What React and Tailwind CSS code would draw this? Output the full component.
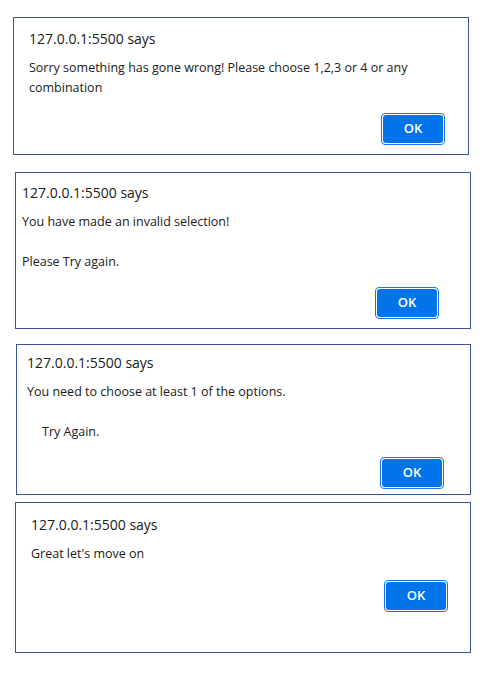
function OkButton() {
  return (
    <button
      type="button"
      className="w-[64px] h-[32px] rounded-[4px] border border-[#1a73e8] bg-white p-px"
    >
      <span className="flex items-center justify-center w-full h-full rounded-[3px] bg-[#0074e8] text-white text-[13px] font-semibold">
        OK
      </span>
    </button>
  )
}

function Dialog({ className, padTop, padLeft, padRight, children, buttonGap }) {
  return (
    <div className={`box-border border border-[#3b5590] bg-white flex flex-col ${className}`}>
      <div className={`flex flex-col ${padTop} ${padLeft} ${padRight}`}>
        <h2 className="text-[14px] leading-[20px] text-[#202020]">127.0.0.1:5500 says</h2>
        <div className="mt-[9px] text-[12.5px] leading-[20px] text-[#202020]">{children}</div>
        <div className={`flex justify-end ${buttonGap}`}>
          <OkButton />
        </div>
      </div>
    </div>
  )
}

export default function App() {
  return (
    <div
      className="w-[490px] h-[673px] bg-white flex flex-col"
      style={{ fontFamily: '"Open Sans", "Noto Sans", sans-serif' }}
    >
      {/* sorry */}
      <Dialog
        className="ml-[13px] mt-[17px] w-[456px] h-[138px]"
        padTop="pt-[11px]"
        padLeft="pl-[15px]"
        padRight="pr-[23px]"
        buttonGap="mt-[15px]"
      >
        <p className="max-w-[390px]">Sorry something has gone wrong! Please choose 1,2,3 or 4 or any combination</p>
      </Dialog>

      {/* invalid */}
      <Dialog
        className="ml-[15px] mt-[17px] w-[456px] h-[157px]"
        padTop="pt-[10px]"
        padLeft="pl-[6px]"
        padRight="pr-[31px]"
        buttonGap="mt-[15px]"
      >
        <p>You have made an invalid selection!</p>
        <p className="h-[20px]"></p>
        <p>Please Try again.</p>
      </Dialog>

      {/* at least one */}
      <Dialog
        className="ml-[16px] mt-[15px] w-[455px] h-[151px]"
        padTop="pt-[8px]"
        padLeft="pl-[10px]"
        padRight="pr-[26px]"
        buttonGap="mt-[15px]"
      >
        <p>You need to choose at least 1 of the options.</p>
        <p className="h-[20px]"></p>
        <p className="pl-[15px]">Try Again.</p>
      </Dialog>

      {/* great */}
      <Dialog
        className="ml-[15px] mt-[7px] w-[456px] h-[151px]"
        padTop="pt-[12px]"
        padLeft="pl-[15px]"
        padRight="pr-[22px]"
        buttonGap="mt-[16px]"
      >
        <p>Great let's move on</p>
      </Dialog>
    </div>
  )
}
